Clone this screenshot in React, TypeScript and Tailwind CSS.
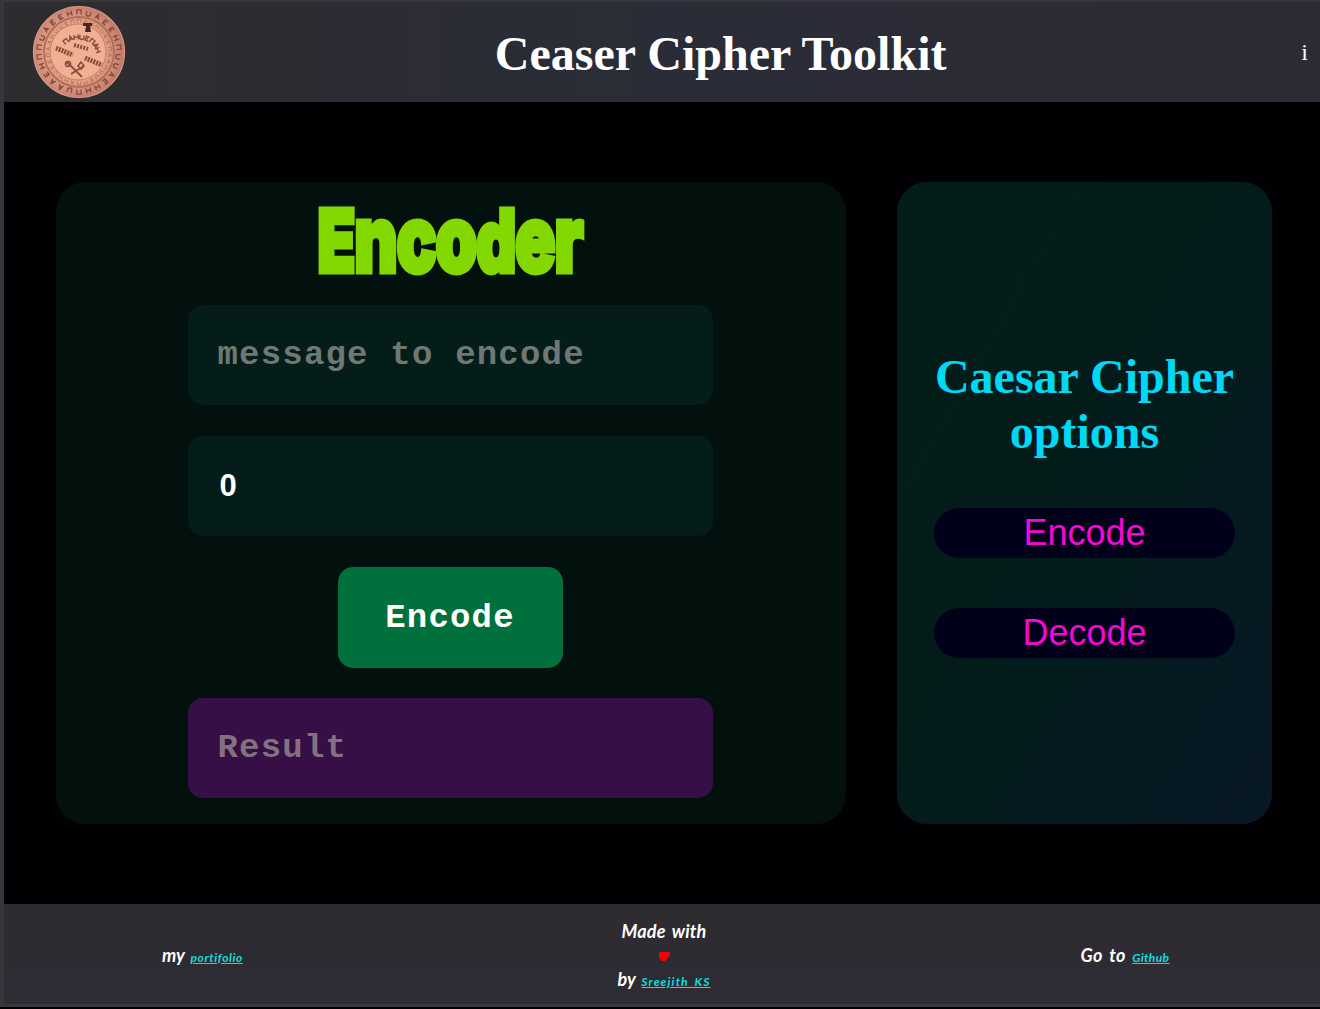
import React from "react";

const OUTER = Array.from({ length: 26 }, (_, i) => i * (360 / 26));
const INNER = Array.from({ length: 30 }, (_, i) => i * 12);
const MARKS = [
  "M-2 2V-2.5H2V2",
  "M-2-2.5V2.5M-2 0H2M2-2.5V2.5",
  "M2-2H-1.5V2H2M-1.5 0H1",
  "M-2 2L0-2.5L2 2M-1 .5H1",
  "M-2-2V1.5L0 2.5L2 1.5V-2",
];

function Coin() {
  return (
    <svg className="size-[94px] shrink-0" viewBox="0 0 94 94" fill="none">
      <defs>
        <radialGradient id="coin" cx=".46" cy=".5" r=".54">
          <stop offset="0" stopColor="#f3b294" />
          <stop offset=".6" stopColor="#e5a085" />
          <stop offset="1" stopColor="#bd7a67" />
        </radialGradient>
      </defs>
      <circle cx="47" cy="47" r="45.5" fill="url(#coin)" stroke="#d99a87" strokeWidth="1.2" />
      <circle cx="47" cy="47" r="35" stroke="#b06e59" strokeWidth="1.8" />
      <circle cx="46" cy="47" r="28" fill="#f0b193" stroke="#c28067" strokeWidth="1" />
      {OUTER.map((a, i) => (
        <path key={a} d={MARKS[(i * 3 + (i % 4)) % 5]} transform={`rotate(${a} 47 47) translate(47 7.5) scale(1.05)`} stroke="#854840" strokeWidth="1.2" />
      ))}
      {INNER.map((a, i) => (
        <path key={a} d={MARKS[(i * 2 + (i % 3)) % 5]} transform={`rotate(${a} 47 47) translate(47 16) scale(.75)`} stroke="#ad6b57" strokeWidth=".9" />
      ))}
      {[-40, -24, -8, 8, 24, 40, 56, 70].map((a, i) => (
        <path key={a} d={MARKS[(i * 3) % 5]} transform={`translate(47 52) rotate(${a}) translate(0 -20)`} stroke="#8e4a3c" strokeWidth="1.4" />
      ))}
      <g stroke="#8b4c3d">
        <path d="M24 43l17 7M53 53l17 7" strokeWidth="5" strokeDasharray="2 1" />
        <path d="M42 40l14 4" strokeWidth="4" strokeDasharray="2 1.2" />
        <path d="M34 57l4 3 12 12M39 69l13-8" strokeWidth="1.8" />
        <circle cx="36" cy="59" r="2.5" strokeWidth="1.6" />
        <path d="M46 61l3-4 3 4-3 3z" strokeWidth="1.6" />
      </g>
      <path d="M51 18h9v3h-2l1 6h-6l1-6h-3z" fill="#482521" />
    </svg>
  );
}

const field =
  "h-[100px] w-[525px] rounded-[15px] px-[30px] font-bold leading-none outline-none placeholder:opacity-100";
const mono = "text-[34px] tracking-[1.2px]";
const option =
  "h-[50px] w-[301px] rounded-full bg-[#01001b] font-['Liberation_Sans',sans-serif] text-[36px] leading-[50px] text-[#f707d3]";
const link = "text-[12px] text-[#10dfdf] underline";

export default function App() {
  return (
    <div className="flex h-[1009px] w-[1320px] flex-col overflow-hidden border-b-2 border-black bg-[#37363b] pt-0.5 pl-1 font-['Liberation_Serif',serif]">
      <header className="flex h-[100px] items-center bg-gradient-to-r from-[#2d2c2f] via-[#2a2c37] to-[#2c2b34] pr-3 pl-7">
        <Coin />
        <h1 className="flex-1 pt-[3px] pl-[14px] text-center text-[48px] leading-none font-bold text-white">Ceaser Cipher Toolkit</h1>
        <span className="text-[24px] text-white">i</span>
      </header>

      <main className="flex h-[802px] gap-[51px] bg-[#010104] pt-20 pl-[52px]">
        <section className="flex h-[642px] w-[790px] shrink-0 flex-col items-center rounded-[30px] bg-[#03110e] pr-[2px] font-['Liberation_Mono',monospace]">
          <h2 className="flex h-[123px] w-full items-center justify-center pb-[11px] font-['Inter',sans-serif] leading-none font-black text-[#82d800]">
            <span className="inline-block origin-center scale-x-[0.72] text-[86px] tracking-[-1.7px] whitespace-nowrap [-webkit-text-stroke:5px_#82d800]">
              E<span className="text-[93px]">nco</span>d<span className="text-[93px]">er</span>
            </span>
          </h2>
          <div className="flex flex-col items-center gap-[31px]">
            <input className={`${field} ${mono} bg-[#051d18] text-white placeholder:text-[#6f7874]`} placeholder="message to encode" />
            <input className={`${field} bg-[#051d18] pl-8 font-['Liberation_Sans',sans-serif] text-[31px] text-white`} defaultValue="0" />
            <button className={`${mono} h-[101px] w-[225px] rounded-[15px] bg-[#00703c] pt-0.5 font-bold text-white`}>Encode</button>
            <input className={`${field} ${mono} -mt-px bg-[#350f46] placeholder:text-[#83717f]`} placeholder="Result" readOnly />
          </div>
        </section>

        <aside className="flex h-[642px] w-[375px] shrink-0 flex-col items-center rounded-[30px] bg-gradient-to-br from-[#031e19] via-[#031c1b] to-[#071725] pt-[167px]">
          <h2 className="w-[320px] text-center text-[48px] leading-[55px] font-bold text-[#00d9f5]">Caesar Cipher options</h2>
          <div className="mt-[49px] flex flex-col gap-[50px]">
            <button className={option}>Encode</button>
            <button className={option}>Decode</button>
          </div>
        </aside>
      </main>

      <footer className="grid h-[100px] grid-cols-[397px_526px_393px] items-center bg-gradient-to-b from-[#2e2c2f] to-[#2d2b35] pt-[4px] text-center font-['Comic_Sans_MS','Lato',sans-serif] text-[18px] leading-[24px] font-bold text-white italic [word-spacing:2px]">
        <p>my <a className={`${link} tracking-[0.6px]`}>portifolio</a></p>
        <div>
          <p className="tracking-[0.2px]">Made with</p>
          <svg className="mx-auto my-1 h-4 w-[11px]" viewBox="0 0 11 16" fill="#fa0006"><path d="M0 5H11V8L9 10L8 12L6 14H3L0 11Z" /></svg>
          <p>by <a className={`${link} tracking-[1.1px]`}>Sreejith KS</a></p>
        </div>
        <p className="pl-[3px] tracking-[0.4px]">Go to <a className={link}>Github</a></p>
      </footer>
    </div>
  );
}
